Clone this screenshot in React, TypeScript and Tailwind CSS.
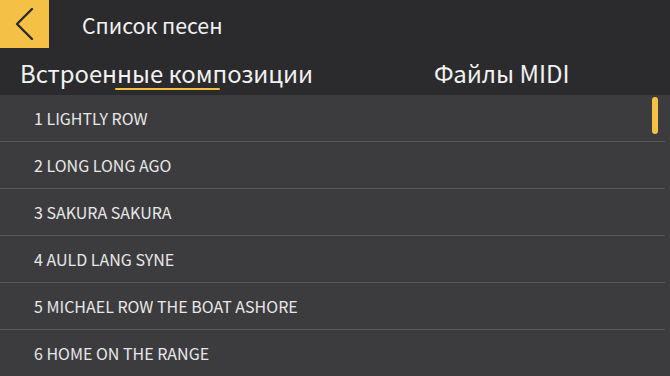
const songs = [
  '1 LIGHTLY ROW',
  '2 LONG LONG AGO',
  '3 SAKURA SAKURA',
  '4 AULD LANG SYNE',
  '5 MICHAEL ROW THE BOAT ASHORE',
  '6 HOME ON THE RANGE',
];

export default function App() {
  return (
    <div className="w-[670px] h-[376px] overflow-hidden bg-[#2b2b2d] font-['Noto_Sans_CJK_SC',sans-serif] text-[#f2f2f2]">
      {/* Header */}
      <div className="flex h-[48px] items-center">
        <button className="h-[48px] w-[49px] bg-[#f4c146]">
          <svg width="49" height="48" viewBox="0 0 49 48" fill="none">
            <polyline
              points="32,9 17,24 32,39"
              stroke="#2b2b2d"
              strokeWidth="2.4"
              strokeLinecap="round"
              strokeLinejoin="round"
            />
          </svg>
        </button>
        <h1 className="ml-[33px] pt-[2px] text-[21.3px] leading-none">Список песен</h1>
      </div>

      {/* Tabs */}
      <div className="relative flex h-[47px] items-center">
        <div className="ml-[20px] pt-[2px] text-[23.8px] leading-none">Встроенные композиции</div>
        <div className="ml-[121px] pt-[2px] text-[24px] leading-none">Файлы MIDI</div>
        <span className="absolute left-[115px] top-[40px] h-[2px] w-[105px] rounded bg-[#f4c146]" />
      </div>

      {/* Song list */}
      <div className="relative h-[281px] bg-[#3c3c3e]">
        {songs.map((song) => (
          <div key={song} className="mr-[5px] flex h-[47px] items-center border-b border-[#58585a]">
            <span className="ml-[34px] text-[16px] leading-none text-[#e8e8e8]">{song}</span>
          </div>
        ))}
        <span className="absolute right-[12px] top-[2px] h-[37px] w-[6px] rounded-full bg-[#f4c146]" />
      </div>
    </div>
  );
}
